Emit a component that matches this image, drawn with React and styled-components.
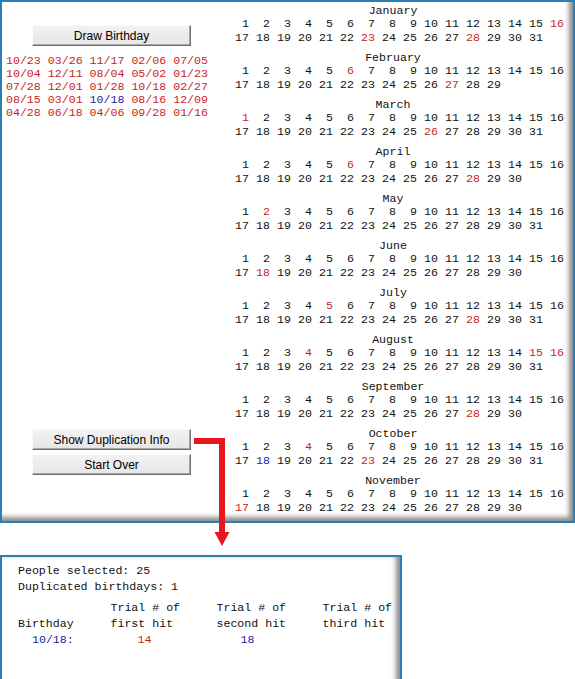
import styled, { createGlobalStyle } from 'styled-components'

const GlobalStyle = createGlobalStyle`
  body {
    margin: 0;
    background: #fff;
  }
`

const mono = `'Liberation Mono', 'Courier New', monospace`
const RED = '#c81e24'
const BLUE = '#1c1ca0'
const FRAME = '#2b7fb3'

const MONTHS = [
  ['January', 31],
  ['February', 29],
  ['March', 31],
  ['April', 30],
  ['May', 31],
  ['June', 30],
  ['July', 31],
  ['August', 31],
  ['September', 30],
  ['October', 31],
  ['November', 30],
]

const PICKS = [
  ['10/23', '03/26', '11/17', '02/06', '07/05'],
  ['10/04', '12/11', '08/04', '05/02', '01/23'],
  ['07/28', '12/01', '01/28', '10/18', '02/27'],
  ['08/15', '03/01', '10/18', '08/16', '12/09'],
  ['04/28', '06/18', '04/06', '09/28', '01/16'],
]
const DUP = '10/18'

const Page = styled.div`
  position: relative;
  width: 575px;
  height: 679px;
  overflow: hidden;
  font-family: ${mono};
  font-size: 11.6px;
  color: #111;
`

const MainPanel = styled.div`
  box-sizing: border-box;
  height: 523px;
  border: 2px solid ${FRAME};
  box-shadow: inset -6px -6px 5px -2px rgba(0, 0, 0, 0.45);
  display: flex;
`

const LeftColumn = styled.div`
  width: 226px;
  display: flex;
  flex-direction: column;
  padding-top: 23px;
`

const Btn = styled.div`
  box-sizing: border-box;
  width: 159px;
  height: 21px;
  margin-left: 30px;
  display: flex;
  align-items: center;
  justify-content: center;
  background: linear-gradient(#f2f2f2, #e6e6e6);
  border: 1px solid;
  border-color: #fbfbfb #6f6f6f #6f6f6f #fbfbfb;
  box-shadow: inset -1px -1px 0 #a8a8a8;
  font-family: 'Liberation Sans', Arial, sans-serif;
  font-size: 12px;
  color: #000;
`

const DateGrid = styled.div`
  margin-top: 8px;
  padding-left: 4px;
  display: grid;
  grid-template-columns: repeat(5, 41.8px);
  line-height: 13px;
`

const DateText = styled.span`
  color: ${(p) => (p.$dup ? BLUE : RED)};
  white-space: pre;
`

const ButtonStack = styled.div`
  margin-top: 310px;
  display: flex;
  flex-direction: column;
  gap: 4px;
`

const Calendar = styled.div`
  width: 336px;
  padding-top: 2px;
`

const Month = styled.div`
  margin-bottom: 6px;
`

const MonthTitle = styled.div`
  text-align: center;
  padding-right: 6px;
  line-height: 13px;
`

const Days = styled.div`
  display: grid;
  grid-template-columns: repeat(16, 21px);
  line-height: 14px;
`

const Day = styled.span`
  text-align: right;
  color: ${(p) => p.$color || '#111'};
`

const InfoPanel = styled.div`
  box-sizing: border-box;
  width: 402px;
  height: 150px;
  margin-top: 32px;
  border: 2px solid ${FRAME};
  box-shadow: inset -6px 0 5px -2px rgba(0, 0, 0, 0.45);
  padding: 6px 0 0 16px;
  line-height: 16px;
`

const InfoTable = styled.div`
  margin-top: 5px;
  display: grid;
  grid-template-columns: 92.5px 106px 106px auto;
`

const Cell = styled.span`
  white-space: pre;
  padding-left: ${(p) => p.$indent || 0}px;
  color: ${(p) => p.$color || '#111'};
`

const Arrow = styled.svg`
  position: absolute;
  left: 192px;
  top: 436px;
  width: 40px;
  height: 112px;
`

function dayColor(month, day) {
  const key = `${String(month).padStart(2, '0')}/${String(day).padStart(2, '0')}`
  if (key === DUP) return BLUE
  if (PICKS.some((row) => row.includes(key))) return RED
  return null
}

export default function App() {
  let dupSeen = 0
  return (
    <Page>
      <GlobalStyle />
      <MainPanel>
        <LeftColumn>
          <Btn>Draw Birthday</Btn>
          <DateGrid>
            {PICKS.flat().map((d, i) => {
              const isDup = d === DUP && dupSeen++ > 0
              return (
                <DateText key={i} $dup={isDup}>
                  {d}
                </DateText>
              )
            })}
          </DateGrid>
          <ButtonStack>
            <Btn>Show Duplication Info</Btn>
            <Btn>Start Over</Btn>
          </ButtonStack>
        </LeftColumn>
        <Calendar>
          {MONTHS.map(([name, count], m) => (
            <Month key={name}>
              <MonthTitle>{name}</MonthTitle>
              <Days>
                {Array.from({ length: count }, (_, i) => (
                  <Day key={i} $color={dayColor(m + 1, i + 1)}>
                    {i + 1}
                  </Day>
                ))}
              </Days>
            </Month>
          ))}
        </Calendar>
      </MainPanel>

      <InfoPanel>
        <div>People selected: 25</div>
        <div>Duplicated birthdays: 1</div>
        <InfoTable>
          <Cell />
          <Cell>Trial # of</Cell>
          <Cell>Trial # of</Cell>
          <Cell>Trial # of</Cell>
          <Cell>Birthday</Cell>
          <Cell>first hit</Cell>
          <Cell>second hit</Cell>
          <Cell>third hit</Cell>
          <Cell $indent={14} $color={BLUE}>10/18:</Cell>
          <Cell $indent={27} $color={RED}>14</Cell>
          <Cell $indent={24} $color={BLUE}>18</Cell>
          <Cell />
        </InfoTable>
      </InfoPanel>

      <Arrow viewBox="0 0 40 112">
        <rect x="2" y="2" width="31" height="6" fill="#e5161c" />
        <rect x="27" y="2" width="6" height="96" fill="#e5161c" />
        <polygon points="22.5,96 37.5,96 30,110" fill="#e5161c" />
      </Arrow>
    </Page>
  )
}
